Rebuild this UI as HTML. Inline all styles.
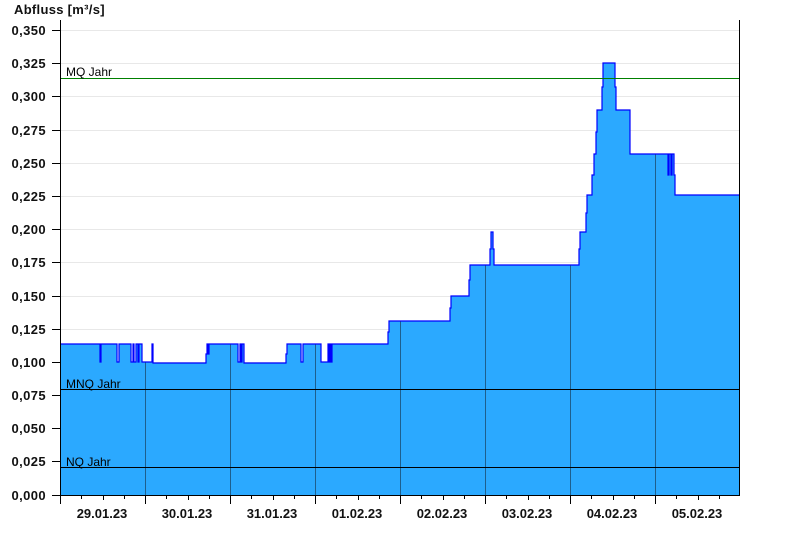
<!DOCTYPE html>
<html><head><meta charset="utf-8"><style>
html,body{margin:0;padding:0;background:#fff;width:800px;height:550px;overflow:hidden}
svg{display:block}
text{font-family:"Liberation Sans",Arial,sans-serif}
</style></head><body>
<svg width="800" height="550" viewBox="0 0 800 550" xmlns="http://www.w3.org/2000/svg">
<defs>
<path id="top" d="M60 344 L100 344 L100 362 L101 362 L101 344 L117 344 L117 362 L119 362 L119 344 L131 344 L131 362 L133 362 L133 344 L134 344 L134 362 L136 362 L136 344 L138 344 L138 362 L139 362 L139 344 L142 344 L142 362 L152 362 L152 344 L153 344 L153 363 L206 363 L206 354 L207 354 L207 344 L208 344 L208 354 L209 354 L209 344 L238 344 L238 362 L240 362 L240 344 L241 344 L241 362 L242 362 L242 344 L244 344 L244 363 L286 363 L286 354 L287 354 L287 344 L301 344 L301 362 L303 362 L303 344 L321 344 L321 362 L328 362 L328 344 L329 344 L329 362 L330 362 L330 344 L331 344 L331 362 L332 362 L332 344 L388 344 L388 332 L389 332 L389 321 L450 321 L450 308 L451 308 L451 296 L469 296 L469 280 L470 280 L470 265 L490 265 L490 249 L491 249 L491 232 L493 232 L493 249 L494 249 L494 265 L579 265 L579 249 L580 249 L580 232 L586 232 L586 213 L587 213 L587 195 L592 195 L592 175 L594 175 L594 154 L596 154 L596 132 L597 132 L597 110 L602 110 L602 87 L603 87 L603 63 L615 63 L615 87 L616 87 L616 110 L630 110 L630 154 L668 154 L668 175 L669 175 L669 154 L671 154 L671 175 L672 175 L672 154 L674 154 L674 175 L675 175 L675 195 L740 195"/>
</defs>
<g stroke="#e8e8e8" stroke-width="1">
<line x1="60" x2="740" y1="30.5" y2="30.5"/>
<line x1="60" x2="740" y1="63.5" y2="63.5"/>
<line x1="60" x2="740" y1="96.5" y2="96.5"/>
<line x1="60" x2="740" y1="130.5" y2="130.5"/>
<line x1="60" x2="740" y1="163.5" y2="163.5"/>
<line x1="60" x2="740" y1="196.5" y2="196.5"/>
<line x1="60" x2="740" y1="229.5" y2="229.5"/>
<line x1="60" x2="740" y1="262.5" y2="262.5"/>
<line x1="60" x2="740" y1="296.5" y2="296.5"/>
<line x1="60" x2="740" y1="329.5" y2="329.5"/>
<line x1="60" x2="740" y1="362.5" y2="362.5"/>
</g>
<path fill="#2ba9ff" stroke="none" d="M60 495 L60 344 L100 344 L100 362 L101 362 L101 344 L117 344 L117 362 L119 362 L119 344 L131 344 L131 362 L133 362 L133 344 L134 344 L134 362 L136 362 L136 344 L138 344 L138 362 L139 362 L139 344 L142 344 L142 362 L152 362 L152 344 L153 344 L153 363 L206 363 L206 354 L207 354 L207 344 L208 344 L208 354 L209 354 L209 344 L238 344 L238 362 L240 362 L240 344 L241 344 L241 362 L242 362 L242 344 L244 344 L244 363 L286 363 L286 354 L287 354 L287 344 L301 344 L301 362 L303 362 L303 344 L321 344 L321 362 L328 362 L328 344 L329 344 L329 362 L330 362 L330 344 L331 344 L331 362 L332 362 L332 344 L388 344 L388 332 L389 332 L389 321 L450 321 L450 308 L451 308 L451 296 L469 296 L469 280 L470 280 L470 265 L490 265 L490 249 L491 249 L491 232 L493 232 L493 249 L494 249 L494 265 L579 265 L579 249 L580 249 L580 232 L586 232 L586 213 L587 213 L587 195 L592 195 L592 175 L594 175 L594 154 L596 154 L596 132 L597 132 L597 110 L602 110 L602 87 L603 87 L603 63 L615 63 L615 87 L616 87 L616 110 L630 110 L630 154 L668 154 L668 175 L669 175 L669 154 L671 154 L671 175 L672 175 L672 154 L674 154 L674 175 L675 175 L675 195 L740 195 L740 495 Z"/>
<g stroke="#1d5f8e" stroke-width="1">
<line x1="145.5" x2="145.5" y1="362" y2="495"/>
<line x1="230.5" x2="230.5" y1="344" y2="495"/>
<line x1="315.5" x2="315.5" y1="344" y2="495"/>
<line x1="400.5" x2="400.5" y1="321" y2="495"/>
<line x1="485.5" x2="485.5" y1="265" y2="495"/>
<line x1="570.5" x2="570.5" y1="265" y2="495"/>
<line x1="655.5" x2="655.5" y1="154" y2="495"/>
</g>
<use href="#top" fill="none" stroke="#0000ff" stroke-width="1.2"/>
<line x1="60" x2="740" y1="78.5" y2="78.5" stroke="#008000" stroke-width="1"/>
<line x1="60" x2="740" y1="389.5" y2="389.5" stroke="#000" stroke-width="1"/>
<line x1="60" x2="740" y1="467.5" y2="467.5" stroke="#000" stroke-width="1"/>
<g font-size="12" fill="#000">
<text x="66" y="76">MQ Jahr</text>
<text x="66" y="388">MNQ Jahr</text>
<text x="66" y="466">NQ Jahr</text>
</g>
<g stroke="#000" stroke-width="1">
<line x1="60.5" x2="60.5" y1="20" y2="504"/>
<line x1="739.5" x2="739.5" y1="20" y2="495"/>
<line x1="52" x2="740" y1="495.5" y2="495.5"/>
<line x1="52" x2="60" y1="30.5" y2="30.5"/>
<line x1="52" x2="60" y1="63.5" y2="63.5"/>
<line x1="52" x2="60" y1="96.5" y2="96.5"/>
<line x1="52" x2="60" y1="130.5" y2="130.5"/>
<line x1="52" x2="60" y1="163.5" y2="163.5"/>
<line x1="52" x2="60" y1="196.5" y2="196.5"/>
<line x1="52" x2="60" y1="229.5" y2="229.5"/>
<line x1="52" x2="60" y1="262.5" y2="262.5"/>
<line x1="52" x2="60" y1="296.5" y2="296.5"/>
<line x1="52" x2="60" y1="329.5" y2="329.5"/>
<line x1="52" x2="60" y1="362.5" y2="362.5"/>
<line x1="52" x2="60" y1="395.5" y2="395.5"/>
<line x1="52" x2="60" y1="428.5" y2="428.5"/>
<line x1="52" x2="60" y1="461.5" y2="461.5"/>
</g>
<g stroke="#000" stroke-width="1">
<line x1="81.5" x2="81.5" y1="495" y2="499"/><line x1="103.5" x2="103.5" y1="495" y2="500"/><line x1="124.5" x2="124.5" y1="495" y2="499"/><line x1="145.5" x2="145.5" y1="495" y2="504"/>
<line x1="166.5" x2="166.5" y1="495" y2="499"/><line x1="188.5" x2="188.5" y1="495" y2="500"/><line x1="209.5" x2="209.5" y1="495" y2="499"/><line x1="230.5" x2="230.5" y1="495" y2="504"/>
<line x1="251.5" x2="251.5" y1="495" y2="499"/><line x1="273.5" x2="273.5" y1="495" y2="500"/><line x1="294.5" x2="294.5" y1="495" y2="499"/><line x1="315.5" x2="315.5" y1="495" y2="504"/>
<line x1="336.5" x2="336.5" y1="495" y2="499"/><line x1="358.5" x2="358.5" y1="495" y2="500"/><line x1="379.5" x2="379.5" y1="495" y2="499"/><line x1="400.5" x2="400.5" y1="495" y2="504"/>
<line x1="421.5" x2="421.5" y1="495" y2="499"/><line x1="443.5" x2="443.5" y1="495" y2="500"/><line x1="464.5" x2="464.5" y1="495" y2="499"/><line x1="485.5" x2="485.5" y1="495" y2="504"/>
<line x1="506.5" x2="506.5" y1="495" y2="499"/><line x1="528.5" x2="528.5" y1="495" y2="500"/><line x1="549.5" x2="549.5" y1="495" y2="499"/><line x1="570.5" x2="570.5" y1="495" y2="504"/>
<line x1="591.5" x2="591.5" y1="495" y2="499"/><line x1="613.5" x2="613.5" y1="495" y2="500"/><line x1="634.5" x2="634.5" y1="495" y2="499"/><line x1="655.5" x2="655.5" y1="495" y2="504"/>
<line x1="676.5" x2="676.5" y1="495" y2="499"/><line x1="698.5" x2="698.5" y1="495" y2="500"/><line x1="719.5" x2="719.5" y1="495" y2="499"/>
</g>
<g font-size="13" font-weight="bold" fill="#111" text-anchor="end" letter-spacing="0.4">
<text x="46" y="35">0,350</text>
<text x="46" y="68">0,325</text>
<text x="46" y="101">0,300</text>
<text x="46" y="135">0,275</text>
<text x="46" y="168">0,250</text>
<text x="46" y="201">0,225</text>
<text x="46" y="234">0,200</text>
<text x="46" y="267">0,175</text>
<text x="46" y="301">0,150</text>
<text x="46" y="334">0,125</text>
<text x="46" y="367">0,100</text>
<text x="46" y="400">0,075</text>
<text x="46" y="433">0,050</text>
<text x="46" y="466">0,025</text>
<text x="46" y="500">0,000</text>
</g>
<g font-size="13" font-weight="bold" fill="#111" text-anchor="middle">
<text x="102" y="518">29.01.23</text>
<text x="187" y="518">30.01.23</text>
<text x="272" y="518">31.01.23</text>
<text x="357" y="518">01.02.23</text>
<text x="442" y="518">02.02.23</text>
<text x="527" y="518">03.02.23</text>
<text x="612" y="518">04.02.23</text>
<text x="697" y="518">05.02.23</text>
</g>
<text x="14" y="14" font-size="13" font-weight="bold" fill="#111" letter-spacing="0.3">Abfluss [m³/s]</text>
</svg>
</body></html>
